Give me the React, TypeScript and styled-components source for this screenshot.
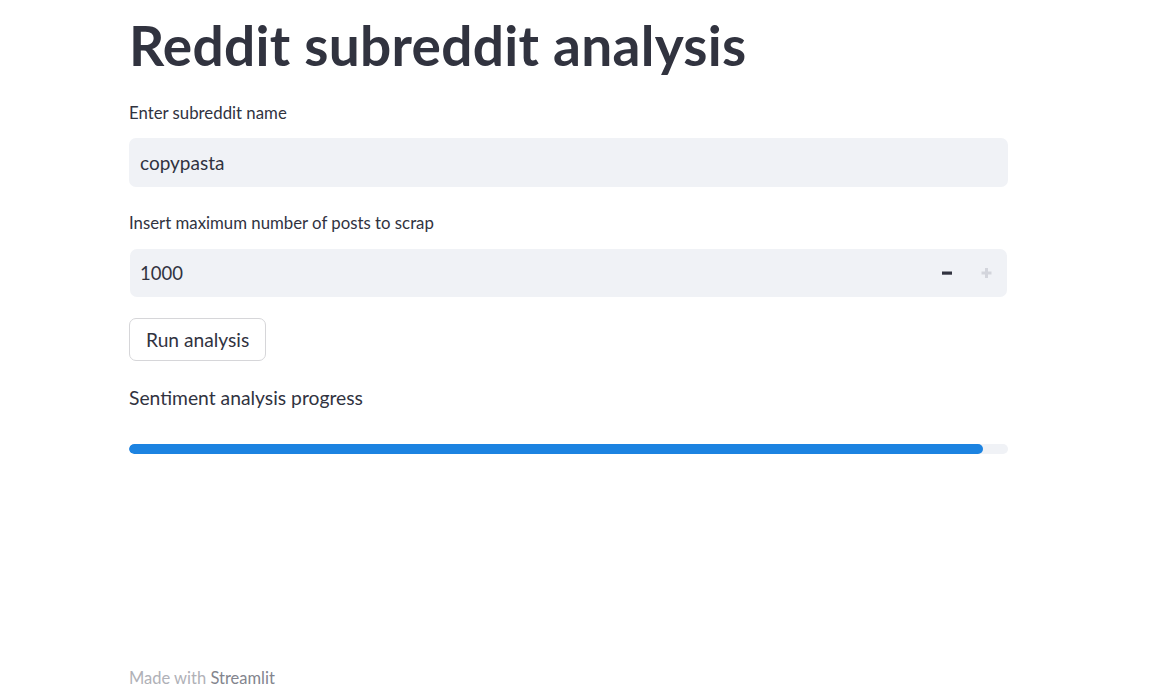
import React from "react";
import styled, { createGlobalStyle } from "styled-components";

const Global = createGlobalStyle`
  html, body { margin: 0; padding: 0; background: #ffffff; }
  body { font-family: "Lato", "Liberation Sans", sans-serif; color: #31333F; }
  * { box-sizing: border-box; }
`;

const Page = styled.div`
  min-height: 700px;
  display: flex;
  flex-direction: column;
`;

const Main = styled.main`
  width: 879px;
  margin-left: 129px;
  padding-top: 12px;
  display: flex;
  flex-direction: column;
`;

const Title = styled.h1`
  margin: 0;
  font-size: 55px;
  line-height: 66px;
  font-weight: 700;
  color: #31333F;
  letter-spacing: 0.3px;
`;

const Field = styled.div<{ $top: number }>`
  display: flex;
  flex-direction: column;
  margin-top: ${(p) => p.$top}px;
`;

const Label = styled.label<{ $gap: number }>`
  font-size: 16.8px;
  line-height: 22px;
  color: #31333F;
  margin-bottom: ${(p) => p.$gap}px;
`;

const TextBox = styled.div`
  height: 49px;
  background: #F0F2F6;
  border-radius: 7px;
  display: flex;
  align-items: center;
  padding-left: 11px;
  font-size: 19px;
  color: #31333F;
`;

const NumberBox = styled.div`
  height: 48px;
  margin-left: 1px;
  margin-right: 1px;
  background: #F0F2F6;
  border-radius: 7px;
  display: flex;
  align-items: center;
  padding-left: 10px;
  padding-right: 1px;
  font-size: 18.5px;
  color: #31333F;
`;

const NumberValue = styled.span`
  flex: 1;
`;

const StepButton = styled.div`
  width: 40px;
  height: 100%;
  display: flex;
  align-items: center;
  justify-content: center;
`;

const Button = styled.button`
  align-self: flex-start;
  margin-top: 21px;
  height: 43px;
  padding: 0 16px;
  background: #ffffff;
  border: 1px solid #D6D6D9;
  border-radius: 7px;
  font-family: inherit;
  font-size: 19.2px;
  color: #31333F;
`;

const ProgressText = styled.div`
  margin-top: 24px;
  font-size: 19.3px;
  line-height: 26px;
  color: #31333F;
`;

const Track = styled.div`
  margin-top: 33px;
  height: 10px;
  background: #F0F2F6;
  border-radius: 10px;
  overflow: hidden;
`;

const Fill = styled.div`
  height: 100%;
  background: #1C83E1;
  border-radius: 10px;
`;

const Footer = styled.footer`
  margin-top: auto;
  margin-left: 129px;
  padding-bottom: 11px;
  font-size: 16.5px;
  line-height: 22px;
  color: #B0B1B7;
`;

const FooterLink = styled.span`
  color: #83858E;
`;

const Minus = () => (
  <svg width="12" height="4" viewBox="0 0 12 4">
    <rect x="2" y="0.5" width="10" height="3.2" fill="#31333F" />
  </svg>
);

const Plus = () => (
  <svg width="12" height="12" viewBox="0 0 12 12">
    <rect x="1.5" y="4.5" width="10" height="3" fill="#D3D5DC" />
    <rect x="5" y="1" width="3" height="10" fill="#D3D5DC" />
  </svg>
);

export default function App() {
  const progress = 97.1;
  return (
    <>
      <Global />
      <Page>
        <Main>
          <Title>Reddit subreddit analysis</Title>
          <Field $top={24}>
            <Label $gap={14}>Enter subreddit name</Label>
            <TextBox>copypasta</TextBox>
          </Field>
          <Field $top={25}>
            <Label $gap={15}>Insert maximum number of posts to scrap</Label>
            <NumberBox>
              <NumberValue>1000</NumberValue>
              <StepButton>
                <Minus />
              </StepButton>
              <StepButton>
                <Plus />
              </StepButton>
            </NumberBox>
          </Field>
          <Button>Run analysis</Button>
          <ProgressText>Sentiment analysis progress</ProgressText>
          <Track>
            <Fill style={{ width: `${progress}%` }} />
          </Track>
        </Main>
        <Footer>
          Made with <FooterLink>Streamlit</FooterLink>
        </Footer>
      </Page>
    </>
  );
}
